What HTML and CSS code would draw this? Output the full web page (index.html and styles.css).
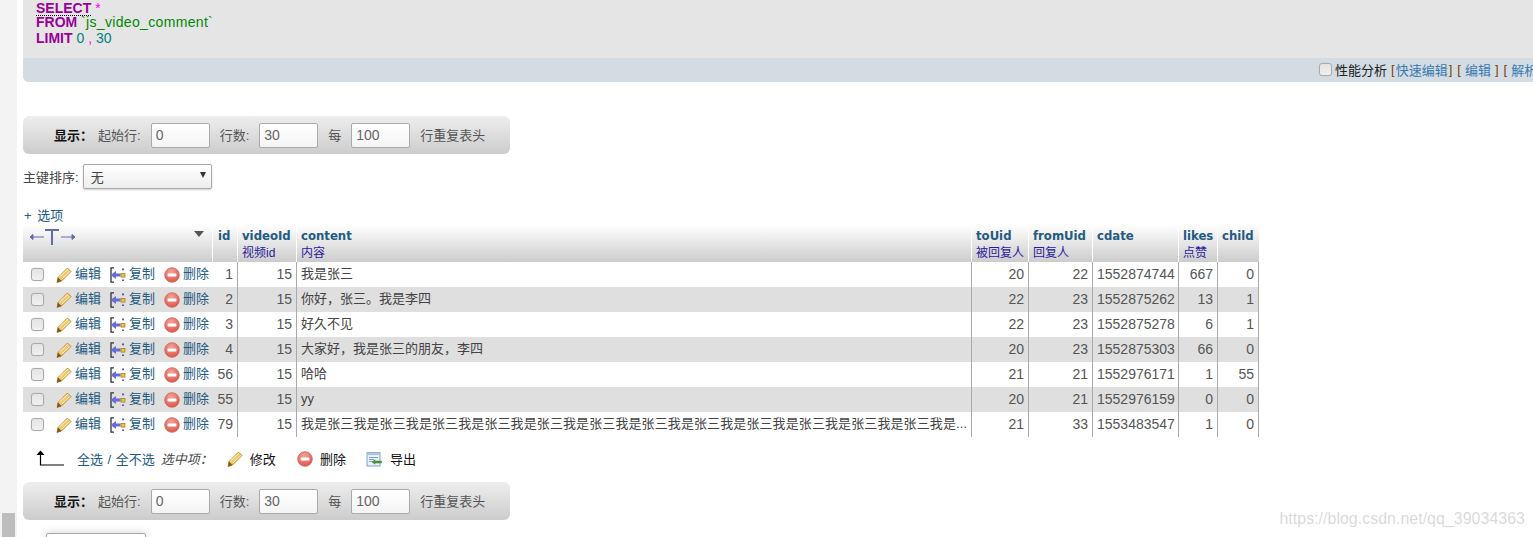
FILE: index.html
```html
<!DOCTYPE html>
<html lang="zh-CN">
<head>
<meta charset="utf-8">
<title>js_video_comment</title>
<link rel="stylesheet" href="styles.css">
</head>
<body>
<svg class="defs" width="0" height="0" aria-hidden="true">
  <defs>
    <linearGradient id="pen" x1="0" y1="0" x2="1" y2="1">
      <stop offset="0" stop-color="#fde9a8"/><stop offset="1" stop-color="#e8a92a"/>
    </linearGradient>
    <radialGradient id="red" cx="0.45" cy="0.3" r="0.8">
      <stop offset="0" stop-color="#f3a59a"/><stop offset="1" stop-color="#dc4a3c"/>
    </radialGradient>
    <symbol id="i-pencil" viewBox="0 0 16 16">
      <path d="M11.5 1 15 4.5 5.5 14 1 15.5 2 10.5Z" fill="url(#pen)" stroke="#b5832b" stroke-width=".9" stroke-linejoin="round"/>
      <path d="M3.6 9.6 12.2 2M6 12 14 4.4" stroke="#fff5cf" stroke-width=".9" fill="none"/>
      <path d="M2 10.5 5.5 14 1 15.5Z" fill="#7d5426"/>
    </symbol>
    <symbol id="i-copy" viewBox="0 0 16 16">
      <path d="M4 .8H1V15.2H4" fill="none" stroke="#333" stroke-width="1.3"/>
      <path d="M.5 8 6 4V6.4H10.5V9.6H6V12Z" fill="#6a6ad8"/>
      <rect x="11" y="6.5" width="4" height="3.6" fill="#f4c430" stroke="#8a6a10" stroke-width=".6"/>
      <rect x="12.2" y="1.5" width="1.7" height="1.8" fill="#3d3da8"/>
      <rect x="12.2" y="12.5" width="1.7" height="1.5" fill="#3d3da8"/>
    </symbol>
    <symbol id="i-del" viewBox="0 0 16 16">
      <circle cx="8" cy="8" r="7.3" fill="url(#red)" stroke="#c9665c" stroke-width=".8"/>
      <rect x="3.6" y="6.5" width="8.8" height="3" rx=".6" fill="#fff"/>
    </symbol>
    <symbol id="i-export" viewBox="0 0 16 16">
      <rect x="1" y="1.5" width="13" height="13.5" fill="#e8f0fa" stroke="#7ea3d0"/>
      <rect x="1" y="1.5" width="13" height="2.5" fill="#a9c4e6"/>
      <path d="M3 6.5H12M3 8.5H8M3 10.5H7" stroke="#8aa0b8"/>
      <path d="M6 11 9 8.8V10H15.5V12H9V13.2Z" fill="#4d9a3a" stroke="#2f6e22" stroke-width=".4"/>
    </symbol>
    <symbol id="i-arrow" viewBox="0 0 28 16">
      <path d="M4.5 4V15H28" fill="none" stroke="#000" stroke-width="1.2"/>
      <path d="M0.5 5 4.5 0.5 8.5 5Z" fill="#000"/>
    </symbol>
  </defs>
</svg>
<div class="page">
  <aside class="gutter"><div class="thumb"></div></aside>
  <main class="main">
    <section class="sql-box">
      <div class="sql-code">
        <div class="sql-line sql-first"><span class="kw kw-dotted">SELECT</span> <span class="op">*</span></div>
        <div class="sql-line"><span class="kw">FROM</span> <span class="tbl">`js_video_comment`</span></div>
        <div class="sql-line"><span class="kw">LIMIT</span> <span class="nr">0</span> <span class="op">,</span> <span class="nr">30</span></div>
      </div>
      <div class="sql-bar">
        <input class="cb" type="checkbox"><span class="profile">性能分析</span>
        <span class="br">[</span><a class="lnk">快速编辑</a><span class="br">]</span>
        <span class="br br-sp">[</span><a class="lnk lnk-sp">编辑</a><span class="br">]</span>
        <span class="br br-sp">[</span><a class="lnk lnk-sp">解析</a>
      </div>
    </section>

    <form class="nav-bar nav-top">
      <b class="nav-title">显示：</b>
      <label class="nav-label">起始行:</label><span class="field">0</span>
      <label class="nav-label">行数:</label><span class="field">30</span>
      <label class="nav-label">每</label><span class="field">100</span>
      <label class="nav-label">行重复表头</label>
    </form>

    <div class="sort-row">
      <span>主键排序:</span>
      <div class="select"><span>无</span><i class="caret"></i></div>
    </div>

    <a class="options">+ 选项</a>

    <table class="data">
      <colgroup>
        <col class="c-cb"><col class="c-act"><col class="c-act"><col class="c-del">
        <col class="c-id"><col class="c-vid"><col class="c-content"><col class="c-to">
        <col class="c-from"><col class="c-date"><col class="c-likes"><col class="c-child">
      </colgroup>
      <thead>
        <tr>
          <th colspan="4" class="th-tools">
            <div class="tools">
              <svg class="t-icon" width="47" height="16" viewBox="0 0 47 16"><path d="M1 8H15M1 8 4 5.5V10.5ZM32 8H46M46 8 43 5.5V10.5Z" fill="#5f6cb0" stroke="#5f6cb0"/><path d="M16 1H30M23 1V16" fill="none" stroke="#5f6cb0" stroke-width="2"/></svg>
              <i class="menu-tri"></i>
            </div>
          </th>
          <th class="th-id"><a class="col-name">id</a></th>
          <th><a class="col-name">videoId</a><span class="col-note">视频id</span></th>
          <th><a class="col-name">content</a><span class="col-note">内容</span></th>
          <th><a class="col-name">toUid</a><span class="col-note">被回复人</span></th>
          <th><a class="col-name">fromUid</a><span class="col-note">回复人</span></th>
          <th><a class="col-name">cdate</a></th>
          <th><a class="col-name">likes</a><span class="col-note">点赞</span></th>
          <th><a class="col-name">child</a></th>
        </tr>
      </thead>
      <tbody id="rows">
        <tr><td class="td-cb"><input class="cb" type="checkbox"></td><td class="act"><svg class="ic"><use href="#i-pencil"/></svg>编辑</td><td class="act"><svg class="ic"><use href="#i-copy"/></svg>复制</td><td class="act"><svg class="ic"><use href="#i-del"/></svg>删除</td><td class="n nb">1</td><td class="n">15</td><td class="txt">我是张三</td><td class="n">20</td><td class="n">22</td><td class="n">1552874744</td><td class="n">667</td><td class="n">0</td></tr>
        <tr><td class="td-cb"><input class="cb" type="checkbox"></td><td class="act"><svg class="ic"><use href="#i-pencil"/></svg>编辑</td><td class="act"><svg class="ic"><use href="#i-copy"/></svg>复制</td><td class="act"><svg class="ic"><use href="#i-del"/></svg>删除</td><td class="n nb">2</td><td class="n">15</td><td class="txt">你好，张三。我是李四</td><td class="n">22</td><td class="n">23</td><td class="n">1552875262</td><td class="n">13</td><td class="n">1</td></tr>
        <tr><td class="td-cb"><input class="cb" type="checkbox"></td><td class="act"><svg class="ic"><use href="#i-pencil"/></svg>编辑</td><td class="act"><svg class="ic"><use href="#i-copy"/></svg>复制</td><td class="act"><svg class="ic"><use href="#i-del"/></svg>删除</td><td class="n nb">3</td><td class="n">15</td><td class="txt">好久不见</td><td class="n">22</td><td class="n">23</td><td class="n">1552875278</td><td class="n">6</td><td class="n">1</td></tr>
        <tr><td class="td-cb"><input class="cb" type="checkbox"></td><td class="act"><svg class="ic"><use href="#i-pencil"/></svg>编辑</td><td class="act"><svg class="ic"><use href="#i-copy"/></svg>复制</td><td class="act"><svg class="ic"><use href="#i-del"/></svg>删除</td><td class="n nb">4</td><td class="n">15</td><td class="txt">大家好，我是张三的朋友，李四</td><td class="n">20</td><td class="n">23</td><td class="n">1552875303</td><td class="n">66</td><td class="n">0</td></tr>
        <tr><td class="td-cb"><input class="cb" type="checkbox"></td><td class="act"><svg class="ic"><use href="#i-pencil"/></svg>编辑</td><td class="act"><svg class="ic"><use href="#i-copy"/></svg>复制</td><td class="act"><svg class="ic"><use href="#i-del"/></svg>删除</td><td class="n nb">56</td><td class="n">15</td><td class="txt">哈哈</td><td class="n">21</td><td class="n">21</td><td class="n">1552976171</td><td class="n">1</td><td class="n">55</td></tr>
        <tr><td class="td-cb"><input class="cb" type="checkbox"></td><td class="act"><svg class="ic"><use href="#i-pencil"/></svg>编辑</td><td class="act"><svg class="ic"><use href="#i-copy"/></svg>复制</td><td class="act"><svg class="ic"><use href="#i-del"/></svg>删除</td><td class="n nb">55</td><td class="n">15</td><td class="txt">yy</td><td class="n">20</td><td class="n">21</td><td class="n">1552976159</td><td class="n">0</td><td class="n">0</td></tr>
        <tr><td class="td-cb"><input class="cb" type="checkbox"></td><td class="act"><svg class="ic"><use href="#i-pencil"/></svg>编辑</td><td class="act"><svg class="ic"><use href="#i-copy"/></svg>复制</td><td class="act"><svg class="ic"><use href="#i-del"/></svg>删除</td><td class="n nb">79</td><td class="n">15</td><td class="txt txt-long">我是张三我是张三我是张三我是张三我是张三我是张三我是张三我是张三我是张三我是张三我是张三我是张三我是...</td><td class="n">21</td><td class="n">33</td><td class="n">1553483547</td><td class="n">1</td><td class="n">0</td></tr>
      </tbody>
    </table>

    <div class="bulk">
      <svg class="bulk-arrow" width="28" height="16"><use href="#i-arrow"/></svg>
      <a class="lnk bulk-all">全选 / 全不选</a>
      <em class="bulk-with">选中项：</em>
      <span class="bulk-item bi-edit"><svg class="ic"><use href="#i-pencil"/></svg>修改</span>
      <span class="bulk-item bi-del"><svg class="ic"><use href="#i-del"/></svg>删除</span>
      <span class="bulk-item bi-exp"><svg class="ic"><use href="#i-export"/></svg>导出</span>
    </div>

    <form class="nav-bar">
      <b class="nav-title">显示：</b>
      <label class="nav-label">起始行:</label><span class="field">0</span>
      <label class="nav-label">行数:</label><span class="field">30</span>
      <label class="nav-label">每</label><span class="field">100</span>
      <label class="nav-label">行重复表头</label>
    </form>

    <div class="stub"></div>
  </main>
</div>
<div class="watermark">https://blog.csdn.net/qq_39034363</div>
</body>
</html>
```
FILE: styles.css
```css
html, body { margin: 0; padding: 0; height: 537px; overflow: hidden; background: #fff; }
body {
  font-family: "Liberation Sans", "Noto Sans CJK SC", sans-serif;
  font-size: 13px;
  color: #444;
  position: relative;
}
a { color: #235a81; text-decoration: none; }
.defs { position: absolute; }

.page { display: flex; height: 537px; width: 1533px; overflow: hidden; }
.gutter { flex: 0 0 17px; background: #f3f3f3; display: flex; flex-direction: column; justify-content: flex-end; align-items: center; }
.thumb { width: 13px; height: 24px; background: #bdbdbd; }
.main { flex: 1; min-width: 0; padding-left: 6px; }

/* SQL box */
.sql-box { background: #e5e5e5; border-bottom-left-radius: 6px; overflow: hidden; }
.sql-code { height: 58px; box-sizing: border-box; padding: 0 0 0 13px; font-size: 14px; line-height: 16px; display: flex; flex-direction: column; }
.sql-line { height: 16px; white-space: nowrap; }
.sql-first { height: 14px; }
.kw { color: #909; font-weight: bold; }
.kw-dotted { text-decoration: underline dotted #000 1px; text-underline-offset: 2px; }
.op { color: #f0f; }
.tbl { color: #080; letter-spacing: .33px; }
.nr { color: #008080; }
.sql-bar {
  height: 24px; background: #d3dce3; display: flex; align-items: center;
  padding: 0 0 2px 1296px; box-sizing: border-box; white-space: nowrap; font-size: 13px;
}
.sql-bar > * { flex: none; }
.profile { color: #222; margin-right: 4px; margin-left: 3px; }
.br { color: #804000; }
.br-sp { margin-left: 5px; }
.lnk { color: #235a81; }
.sql-bar .lnk { color: #3a7ab0; margin: 0 1px; }
.sql-bar .lnk-sp { margin: 0 4px; }

.cb {
  appearance: none; margin: 0; width: 13px; height: 13px; box-sizing: border-box;
  background: linear-gradient(#e4e4e4, #f0f0f0); border: 1px solid #aaa; border-radius: 3px;
  box-shadow: 0 0 1px #bbb;
}

/* navigation bars */
.nav-bar {
  width: 487px; height: 38px; box-sizing: border-box; margin: 0;
  background: linear-gradient(#eee, #ccc); border-radius: 6px;
  display: flex; align-items: center; padding-left: 31px; color: #555;
}
.nav-top { margin-top: 34px; }
.nav-title { color: #111; margin-right: 5px; padding-bottom: 2px; }
.nav-label { margin-right: 10px; white-space: nowrap; padding-bottom: 2px; }
.field {
  width: 59px; height: 25px; box-sizing: border-box; background: linear-gradient(#fff, #f4f4f4);
  border: 1px solid #aaa; border-radius: 2px; padding: 0 4px; line-height: 22px; font-size: 14px;
  color: #666; margin-right: 10px; flex: none;
}

.sort-row { display: flex; align-items: center; gap: 4px; margin-top: 10px; height: 25px; color: #444; }
.select {
  width: 129px; height: 25px; box-sizing: border-box; border: 1px solid #aaa; border-radius: 2px;
  background: linear-gradient(#fff, #eee); padding: 0 7px; display: flex; align-items: center;
  justify-content: space-between; box-shadow: 0 1px 2px #ccc; color: #444;
}
.caret { width: 0; height: 0; border: 3.5px solid transparent; border-top: 6px solid #333; border-bottom: 0; margin-right: -2px; margin-top: -3px; }

.options { display: block; margin: 18px 0 0 1px; height: 18px; line-height: 18px; color: #235a81; word-spacing: 2px; }

/* table */
.data { border-collapse: separate; border-spacing: 0; table-layout: fixed; width: 1236px; }
.c-cb { width: 27px; } .c-act { width: 55px; } .c-del { width: 53px; }
.c-id { width: 25px; } .c-vid { width: 59px; } .c-content { width: 675px; }
.c-to { width: 57px; } .c-from { width: 64px; } .c-date { width: 86px; }
.c-likes { width: 39px; } .c-child { width: 41px; }

.data th {
  height: 37px; box-sizing: border-box; padding: 3px 4px 0 4px; text-align: left; vertical-align: top;
  background: linear-gradient(#fff, #ccc); border-right: 1px solid #fff; font-weight: normal;
}
.data th:last-child { border-right: 0; }
.data th.th-id { padding-left: 5px; }
.data th.th-tools { padding: 0; }
.tools { display: flex; justify-content: space-between; padding: 4px 8px 0 6px; }
.menu-tri { width: 0; height: 0; border: 5.5px solid transparent; border-top: 6px solid #555; border-bottom: 0; margin-top: 2px; }
.col-name {
  display: block; font-family: "DejaVu Sans Condensed", "DejaVu Sans", sans-serif; font-weight: bold;
  font-size: 13px; line-height: 15px; color: #235a81; white-space: nowrap;
}
.col-note { display: block; font-size: 12px; line-height: 17px; margin-top: 2px; color: #2a1a9e; white-space: nowrap; }

.data td {
  height: 25px; box-sizing: border-box; padding: 0 4px 1px; white-space: nowrap; overflow: hidden;
  border-right: 1px solid #aaa; vertical-align: middle; line-height: 24px;
}
.data tbody tr:nth-child(even) { background: #dfdfdf; }
.data td.td-cb { padding: 0 0 1px 8px; border-right: 0; line-height: 0; }
.data td.act { padding: 0 0 1px 6px; border-right: 0; color: #235a81; }
.data td.act:nth-child(3) { padding-left: 5px; }
.data td.act:nth-child(4) { padding-left: 4px; }
.ic { width: 16px; height: 16px; vertical-align: -5px; margin-right: 3px; }
.data td.n { text-align: right; font-size: 14px; color: #555; }
.data td.txt { color: #444; }
.data td.txt-long { letter-spacing: .1px; }

/* bulk actions */
.bulk { display: flex; align-items: center; height: 45px; padding-bottom: 2px; box-sizing: border-box; color: #111; white-space: nowrap; }
.bulk-arrow { margin-left: 13px; margin-top: -1px; flex: none; }
.bulk-all { margin-left: 13px; word-spacing: 1px; }
.bulk-with { margin-left: 6px; color: #444; }
.bulk-item { display: inline-flex; align-items: center; }
.bulk-item .ic { margin-right: 7px; vertical-align: 0; }
.bi-edit { margin-left: 14px; }
.bi-del { margin-left: 21px; }
.bi-exp { margin-left: 20px; }
.bi-exp .ic { margin-right: 8px; }

.stub {
  width: 100px; height: 30px; margin: 13px 0 0 23px; box-sizing: border-box;
  background: #fff; border: 1px solid #aaa; border-radius: 2px; box-shadow: 0 0 8px #ccc;
}

.watermark {
  position: absolute; right: 8px; top: 510px; font-size: 16px; line-height: 18px;
  color: rgba(0,0,0,.1); font-family: "Liberation Sans", sans-serif; text-shadow: 0 0 1px rgba(0,0,0,.08);
}
```
